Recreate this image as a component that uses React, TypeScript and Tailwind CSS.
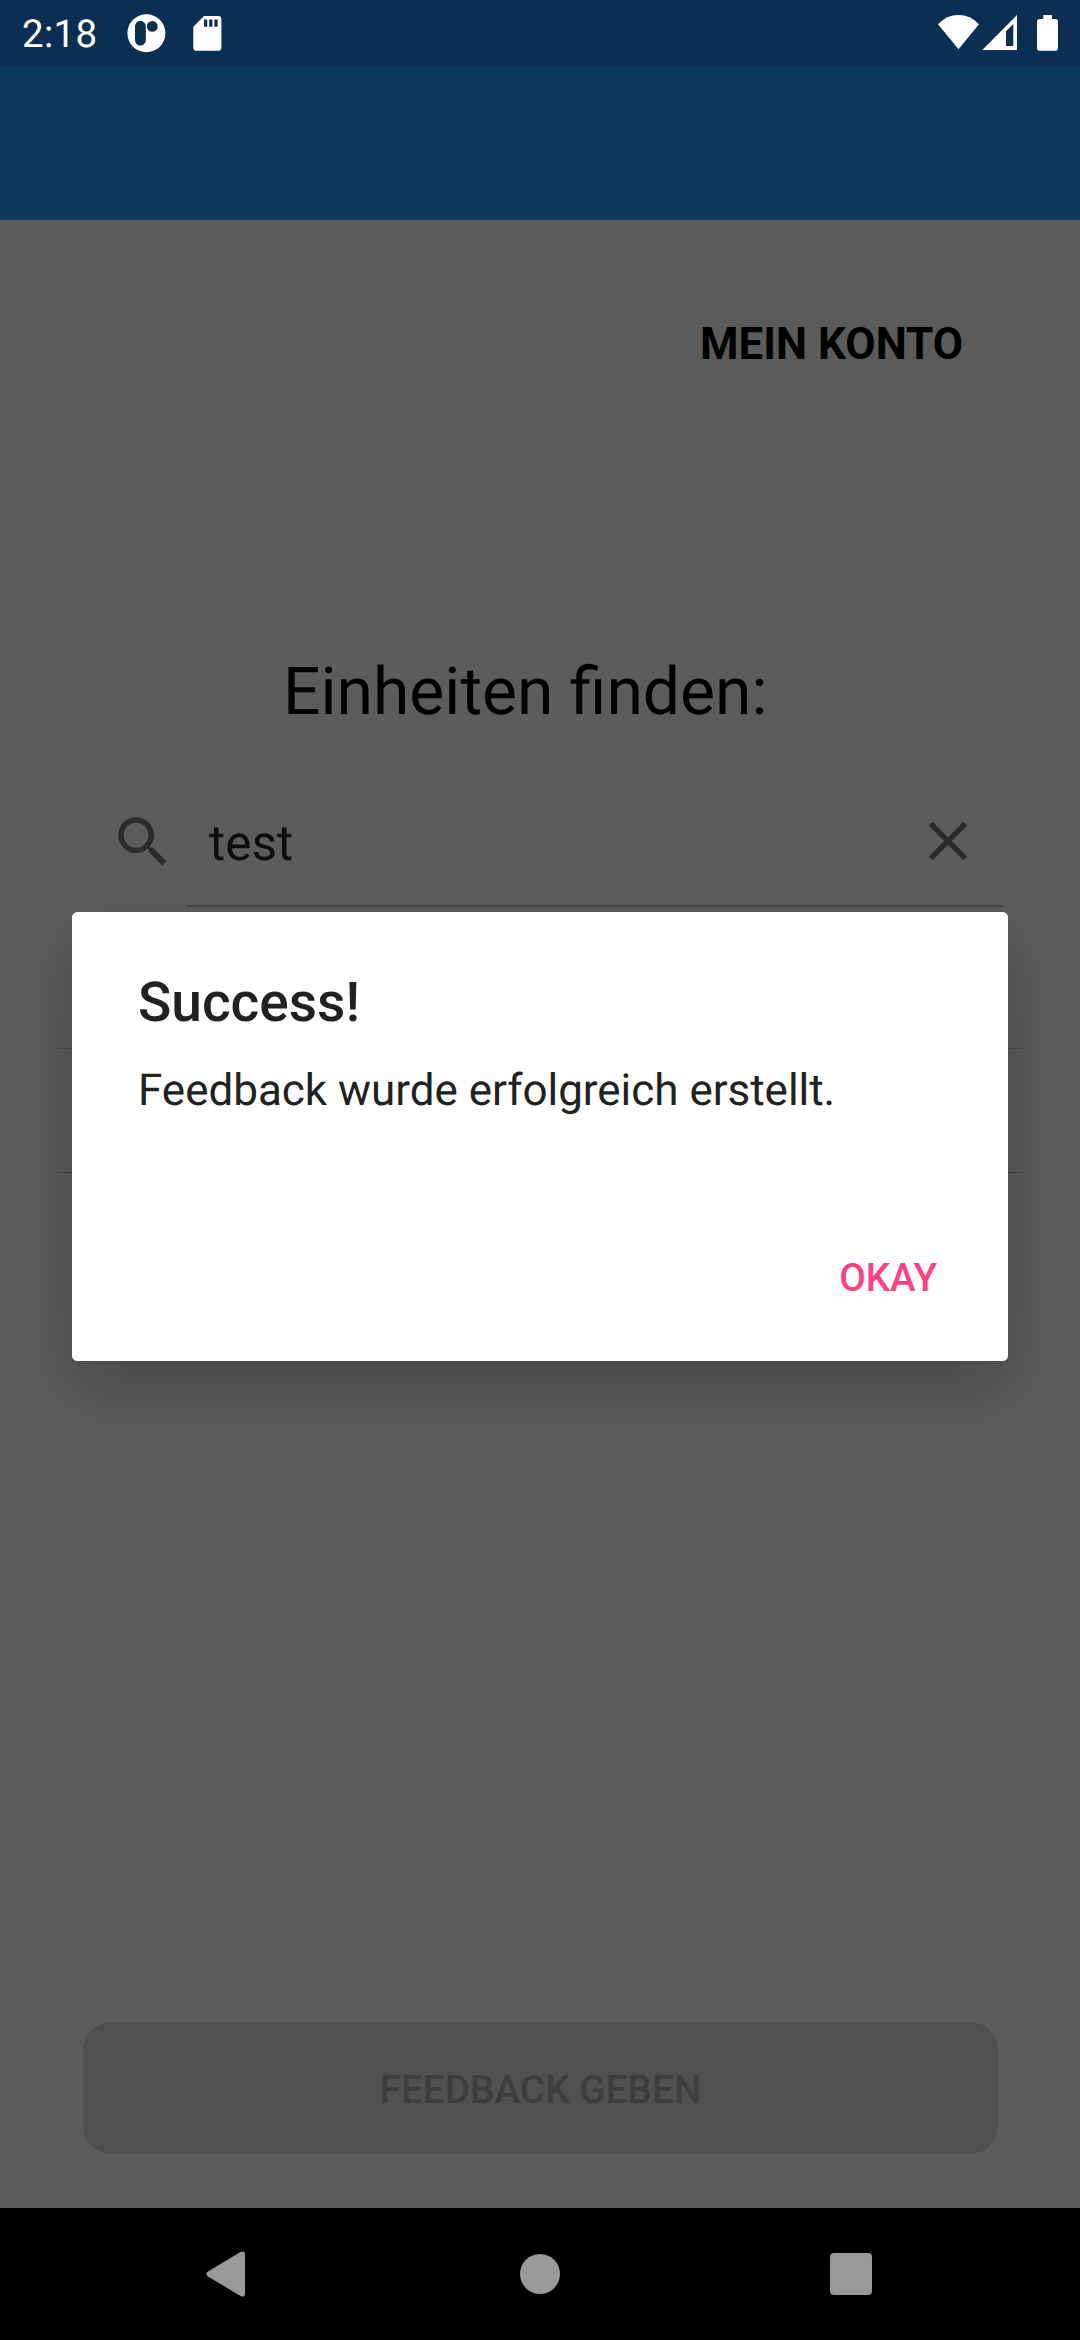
import React from "react";

function StatusBar() {
  return (
    <header className="flex h-[66px] shrink-0 items-start bg-[#0a2f53] pl-[21px] text-white">
      <span className="mt-[11px] w-[104px] pl-[1px] text-[38.5px] leading-[48px] tracking-[0.3px]">2:18</span>
      <svg className="h-[66px] w-[42px]" viewBox="125 0 42 66" fill="currentColor">
        <path
          fillRule="evenodd"
          d="M146.4 14.3a19 19 0 1 0 0 38a19 19 0 0 0 0-38zM140.4 20.8a5.4 5.4 0 0 1 5.4 5.4v14a5.4 5.4 0 0 1-10.8 0v-14a5.4 5.4 0 0 1 5.4-5.4zM152.3 21a5.4 5.4 0 1 1 0 10.8a5.4 5.4 0 0 1 0-10.8z"
        />
      </svg>
      <svg className="ml-[20px] h-[66px] w-[40px]" viewBox="187 0 40 66" fill="currentColor">
        <path
          fillRule="evenodd"
          d="M204 16h14a3.4 3.4 0 0 1 3.4 3.4v28a3.4 3.4 0 0 1-3.4 3.4h-21.3a3.4 3.4 0 0 1-3.4-3.4V26.7zM204 19.4v7.4h3.2v-7.4zM209.2 19.4v7.4h3.2v-7.4zM214.4 19.4v7.4h3.2v-7.4z"
        />
      </svg>
      <svg className="ml-auto h-[66px] w-[148px]" viewBox="932 0 148 66" fill="currentColor">
        <path d="M938 24.3Q946.5 15 958.5 15T979 24.3L958.5 49.3z" />
        <path fillRule="evenodd" d="M982.3 50L1017 15v35zM1006 31.3V46h7.3V24z" />
        <path d="M1043.3 15h8.7v4h3.2a2.8 2.8 0 0 1 2.8 2.8v26.1a2.8 2.8 0 0 1-2.8 2.8h-15.4a2.8 2.8 0 0 1-2.8-2.8V21.8a2.8 2.8 0 0 1 2.8-2.8h3.5z" />
      </svg>
    </header>
  );
}

function SearchField() {
  return (
    <div className="ml-[110px] mr-[77px] mt-[62px] flex h-[113px]">
      <svg className="mt-[14.75px] size-[66px] shrink-0 text-[#2b2b2b]" viewBox="0 0 24 24" fill="currentColor">
        <path d="M15.5 14h-.8l-.3-.3c1-1.1 1.6-2.6 1.6-4.2C16 5.9 13.1 3 9.5 3S3 5.9 3 9.5 5.9 16 9.5 16c1.6 0 3.1-.6 4.2-1.6l.3.3v.8l5 5 1.5-1.5zM9.5 14C7 14 5 12 5 9.5S7 5 9.5 5 14 7 14 9.5 12 14 9.5 14z" />
      </svg>
      <div className="ml-[11px] flex flex-1 border-b-2 border-[#454545] pl-[22px]">
        <span className="mt-[21px] flex-1 text-[49.5px] leading-[58px] text-[#0d0d0d]">test</span>
        <svg className="mr-[22px] mt-[13.6px] size-[66px] text-[#2b2b2b]" viewBox="0 0 24 24" fill="currentColor">
          <path d="M19 6.4L17.6 5 12 10.6 6.4 5 5 6.4 10.6 12 5 17.6 6.4 19 12 13.4 17.6 19 19 17.6 13.4 12z" />
        </svg>
      </div>
    </div>
  );
}

function ResultList() {
  return (
    <ul className="mx-[55px] mt-[18px]">
      <li className="h-[124px] border-b border-[#4d4d4d]" />
      <li className="h-[124px] border-b border-[#4d4d4d]" />
    </ul>
  );
}

function NavigationBar() {
  return (
    <nav className="flex h-[132px] shrink-0 items-center bg-black pl-[205px] text-[#999]">
      <svg className="h-[46px] w-[41px]" viewBox="0 0 41 46" fill="currentColor">
        <path d="M35.4 1.1Q40 -1 40 3.5V42.5Q40 47 35.4 44.9L2.6 25.2Q0 23 2.6 20.8z" />
      </svg>
      <div className="ml-[274px] size-[40px] rounded-full bg-[#999]" />
      <div className="ml-[270px] size-[41.5px] rounded-[4px] bg-[#999]" />
    </nav>
  );
}

function SuccessDialog() {
  return (
    <div className="absolute left-[72px] top-[912px] flex h-[449px] w-[936px] flex-col rounded-[5.5px] bg-white px-[66px] text-[#212121] shadow-[0_28px_64px_rgba(0,0,0,0.23)]">
      <h2 className="mt-[59px] text-[55px] font-medium leading-[64px]">Success!</h2>
      <p className="mt-[29px] text-[44px] leading-[52px] tracking-[-0.03px]">Feedback wurde erfolgreich erstellt.</p>
      <button className="mr-[5px] mt-[139px] self-end text-[38.5px] font-medium leading-[46px] text-[#ff4081]">OKAY</button>
    </div>
  );
}

export default function App() {
  return (
    <div className="relative flex h-[2340px] w-[1080px] flex-col overflow-hidden bg-[#5c5c5c] font-[Roboto,sans-serif] text-black [text-rendering:geometricPrecision]">
      <StatusBar />
      <div className="h-[154px] shrink-0 bg-[#0c3a5b]" />
      <main className="flex flex-1 flex-col">
        <button className="mr-[84px] mt-[57px] flex h-[130px] w-[329px] items-center justify-center self-end rounded-[6px] bg-[#5b5b5b] pt-[4px] text-[44px] font-bold leading-[52px]">
          MEIN KONTO
        </button>
        <h1 className="ml-[283px] mt-[247px] text-[66px] leading-[78px]">Einheiten finden:</h1>
        <SearchField />
        <ResultList />
        <button className="mb-[54px] ml-[83px] mr-[82px] mt-auto flex h-[132px] items-center justify-center rounded-[28px] bg-[#4e514f] pt-[3px] text-[38.5px] font-medium leading-[46px] tracking-[0.15px] text-[#3d3d3d]">
          FEEDBACK GEBEN
        </button>
      </main>
      <NavigationBar />
      <SuccessDialog />
    </div>
  );
}
